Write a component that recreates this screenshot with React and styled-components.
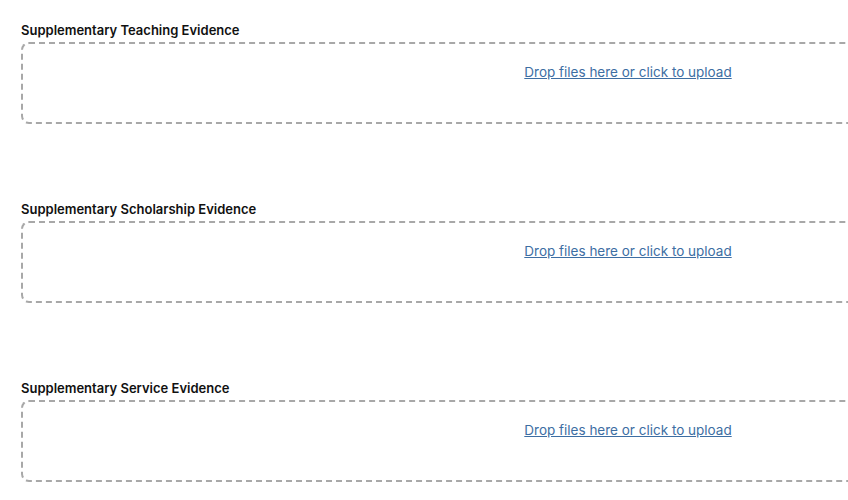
import React from "react";
import styled, { createGlobalStyle } from "styled-components";

const GlobalStyle = createGlobalStyle`
    body {
        margin: 0;
        background: #fff;
        font-family: Inter, "Noto Sans", sans-serif;
        overflow: hidden;
    }
`;

const Page = styled.div`
    padding: 22px 0 0 21px;
    display: flex;
    flex-direction: column;
    gap: 77px;
`;

const Field = styled.div`
    display: flex;
    flex-direction: column;
    gap: 4px;
`;

const Label = styled.div`
    font-size: 13px;
    line-height: 16px;
    font-weight: 600;
    color: #111;
`;

const DropZone = styled.div`
    box-sizing: border-box;
    width: 1214px;
    height: 82px;
    border: 2px dashed #a8a8a8;
    border-radius: 8px;
    padding-top: 17px;
    text-align: center;
`;

const UploadLink = styled.a`
    font-size: 13.5px;
    line-height: 20px;
    color: #3d6ea3;
    text-decoration: underline;
    cursor: pointer;
`;

const fields = [
    "Supplementary Teaching Evidence",
    "Supplementary Scholarship Evidence",
    "Supplementary Service Evidence",
];

const App = () => (
    <>
        <GlobalStyle />
        <Page>
            {fields.map((name) => (
                <Field key={name}>
                    <Label>{name}</Label>
                    <DropZone>
                        <UploadLink>Drop files here or click to upload</UploadLink>
                    </DropZone>
                </Field>
            ))}
        </Page>
    </>
);

export default App;
